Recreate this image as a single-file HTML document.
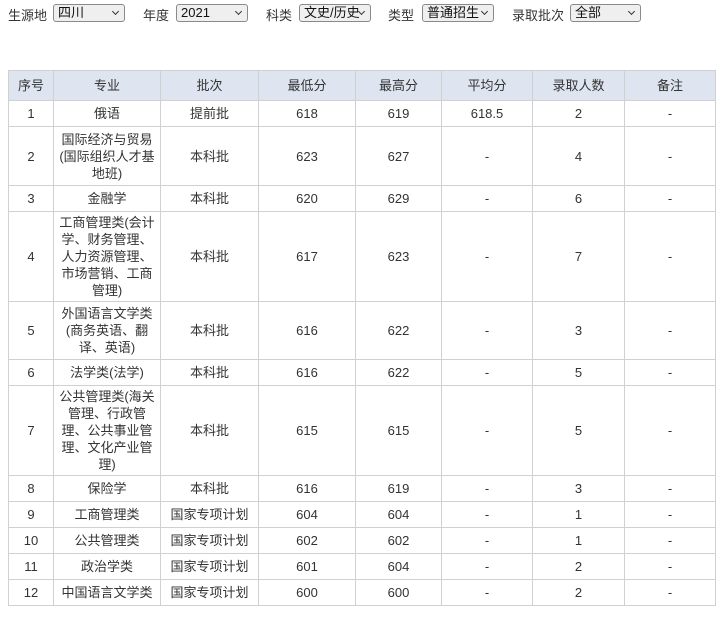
<!DOCTYPE html>
<html><head><meta charset="utf-8"><style>
body{margin:0;background:#fff;font-family:"Liberation Sans","Noto Sans CJK SC",sans-serif;font-size:13px;color:#333;}
.lab{position:absolute;top:5px;font-size:13px;}
.sel{position:absolute;top:4px;height:16px;border:1px solid #8a8a8a;border-radius:3px;background:#efefef;font-size:13px;line-height:16px;padding-left:4px;box-sizing:content-box;overflow:hidden;white-space:nowrap;color:#111;}
.sel:after{content:"";position:absolute;right:6px;top:4px;width:4px;height:4px;border-right:1px solid #333;border-bottom:1px solid #333;transform:rotate(45deg);background:#efefef;}
table{position:absolute;left:8px;top:70px;border-collapse:collapse;table-layout:fixed;}
td,th{border:1px solid #d0d0d0;text-align:center;padding:0 4px;font-weight:normal;line-height:17px;}
th{background:#dfe5f0;height:29px;}
</style></head><body>
<span class="lab" style="left:8px">生源地</span>
<div class="sel" style="left:53px;width:66px">四川</div>
<span class="lab" style="left:143px">年度</span>
<div class="sel" style="left:176px;width:66px">2021</div>
<span class="lab" style="left:266px">科类</span>
<div class="sel" style="left:299px;width:66px">文史/历史</div>
<span class="lab" style="left:388px">类型</span>
<div class="sel" style="left:422px;width:66px">普通招生</div>
<span class="lab" style="left:512px">录取批次</span>
<div class="sel" style="left:570px;width:65px">全部</div>
<table>
<colgroup><col style="width:45px"><col style="width:107px"><col style="width:98px"><col style="width:97px"><col style="width:86px"><col style="width:91px"><col style="width:92px"><col style="width:91px"></colgroup>
<tr><th>序号</th><th>专业</th><th>批次</th><th>最低分</th><th>最高分</th><th>平均分</th><th>录取人数</th><th>备注</th></tr>
<tr style="height:26px"><td>1</td><td>俄语</td><td>提前批</td><td>618</td><td>619</td><td>618.5</td><td>2</td><td>-</td></tr>
<tr style="height:59px"><td>2</td><td>国际经济与贸易<br>(国际组织人才基<br>地班)</td><td>本科批</td><td>623</td><td>627</td><td>-</td><td>4</td><td>-</td></tr>
<tr style="height:26px"><td>3</td><td>金融学</td><td>本科批</td><td>620</td><td>629</td><td>-</td><td>6</td><td>-</td></tr>
<tr style="height:90px"><td>4</td><td>工商管理类(会计<br>学、财务管理、<br>人力资源管理、<br>市场营销、工商<br>管理)</td><td>本科批</td><td>617</td><td>623</td><td>-</td><td>7</td><td>-</td></tr>
<tr style="height:58px"><td>5</td><td>外国语言文学类<br>(商务英语、翻<br>译、英语)</td><td>本科批</td><td>616</td><td>622</td><td>-</td><td>3</td><td>-</td></tr>
<tr style="height:26px"><td>6</td><td>法学类(法学)</td><td>本科批</td><td>616</td><td>622</td><td>-</td><td>5</td><td>-</td></tr>
<tr style="height:90px"><td>7</td><td>公共管理类(海关<br>管理、行政管<br>理、公共事业管<br>理、文化产业管<br>理)</td><td>本科批</td><td>615</td><td>615</td><td>-</td><td>5</td><td>-</td></tr>
<tr style="height:26px"><td>8</td><td>保险学</td><td>本科批</td><td>616</td><td>619</td><td>-</td><td>3</td><td>-</td></tr>
<tr style="height:26px"><td>9</td><td>工商管理类</td><td>国家专项计划</td><td>604</td><td>604</td><td>-</td><td>1</td><td>-</td></tr>
<tr style="height:26px"><td>10</td><td>公共管理类</td><td>国家专项计划</td><td>602</td><td>602</td><td>-</td><td>1</td><td>-</td></tr>
<tr style="height:26px"><td>11</td><td>政治学类</td><td>国家专项计划</td><td>601</td><td>604</td><td>-</td><td>2</td><td>-</td></tr>
<tr style="height:26px"><td>12</td><td>中国语言文学类</td><td>国家专项计划</td><td>600</td><td>600</td><td>-</td><td>2</td><td>-</td></tr>
</table>
</body></html>
